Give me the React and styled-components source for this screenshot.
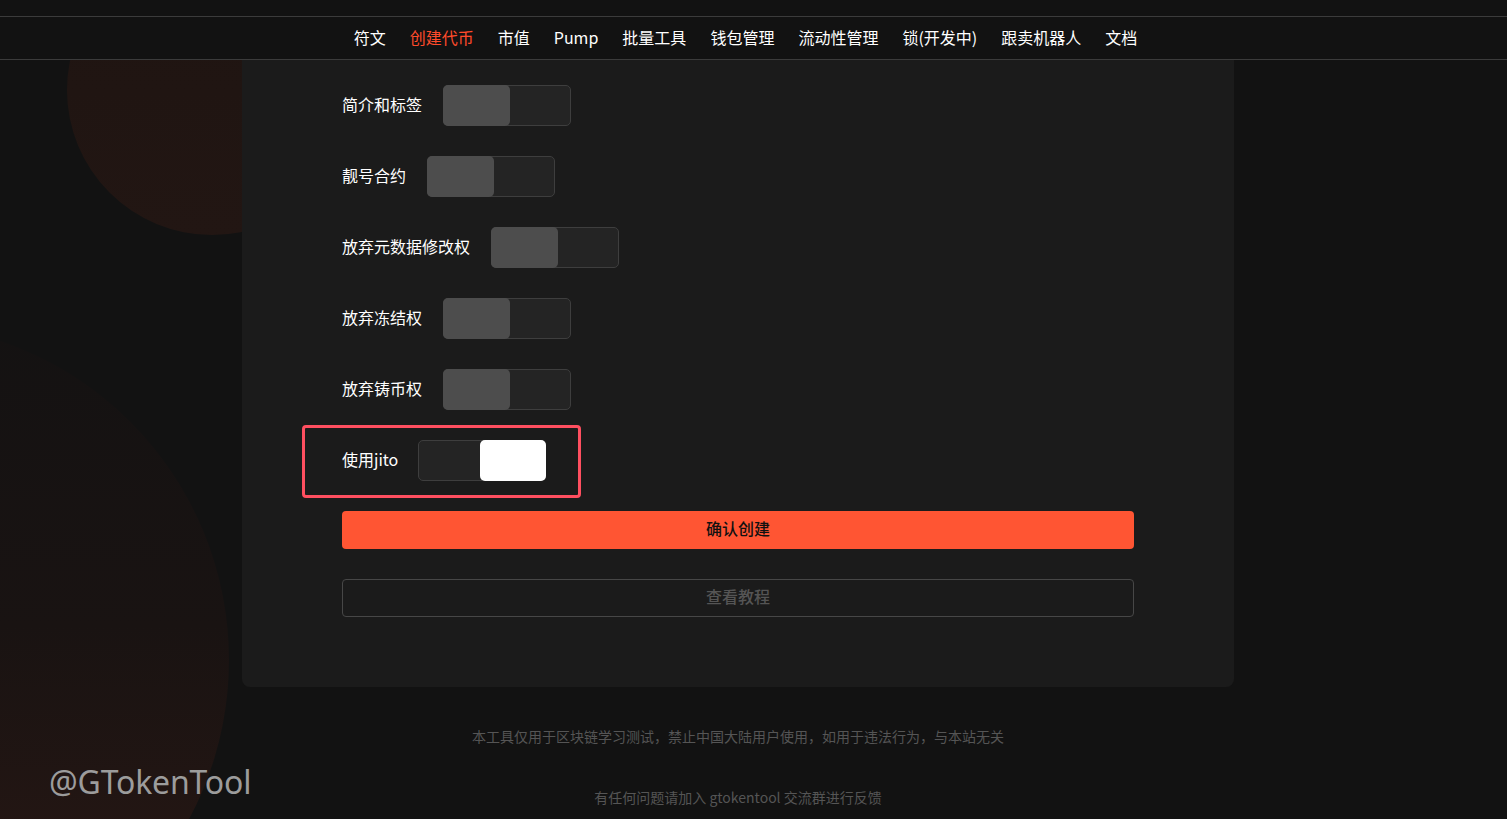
import styled, { createGlobalStyle } from "styled-components";

const GlobalStyle = createGlobalStyle`
  html, body {
    margin: 0;
    padding: 0;
    background: #121212;
    font-family: "Noto Sans CJK SC", "Noto Sans", sans-serif;
    color: #fff;
  }
  * { box-sizing: border-box; }
`;

const Page = styled.div`
  position: relative;
  min-height: 819px;
  overflow: hidden;
  background: #121212;
  padding-right: 31px;
`;

const Blob = styled.div`
  position: absolute;
  border-radius: 50%;
  pointer-events: none;
  left: ${({ x }) => x}px;
  top: ${({ y }) => y}px;
  width: ${({ size }) => size}px;
  height: ${({ size }) => size}px;
  background: ${({ bg }) => bg};
`;

const Header = styled.header`
  position: relative;
  z-index: 1;
  margin-right: -31px;
  padding-top: 16px;
  background: #121212;
`;

const Nav = styled.nav`
  display: flex;
  justify-content: center;
  align-items: center;
  gap: 24px;
  height: 44px;
  padding: 0 31px 3px 15px;
  border-top: 1px solid #3b3b3b;
  border-bottom: 1px solid #3b3b3b;
  background: #121212;
`;

const NavItem = styled.a`
  font-size: 16px;
  line-height: 20px;
  color: ${({ active }) => (active ? "#ff4b2b" : "#fff")};
  text-decoration: none;
  white-space: nowrap;
`;

const Card = styled.main`
  position: relative;
  width: 992px;
  margin: 0 auto;
  background: #1b1b1b;
  border-radius: 0 0 8px 8px;
  padding: 25px 100px 70px;
  display: flex;
  flex-direction: column;
  gap: 30px;
`;

const Row = styled.div`
  position: relative;
  display: flex;
  align-items: center;
  gap: 21px;
  height: 41px;
  align-self: flex-start;

  ${({ marked }) =>
    marked &&
    `
    gap: 20px;
    &::after {
      content: "";
      position: absolute;
      left: -40px;
      top: -15px;
      right: -35px;
      bottom: -17px;
      border: 3px solid #ff4f60;
      border-radius: 4px;
    }
  `}
`;

const Label = styled.span`
  font-size: 16px;
  line-height: 20px;
  padding-bottom: 4px;
  color: #fff;
  white-space: nowrap;
`;

const Switch = styled.div`
  position: relative;
  width: 128px;
  height: 41px;
  border: 1px solid #3e3e3e;
  border-radius: 5px;
  background: #242424;
`;

const Knob = styled.span`
  position: absolute;
  top: -1px;
  ${({ on }) => (on ? "right: -1px;" : "left: -1px;")}
  width: ${({ on }) => (on ? 66 : 67)}px;
  height: 41px;
  border-radius: 5px;
  background: ${({ on }) => (on ? "#ffffff" : "#4d4d4d")};
`;

const Button = styled.button`
  width: 100%;
  height: 38px;
  padding: 0 0 4px;
  border-radius: 4px;
  font-family: inherit;
  font-size: 16px;
  font-weight: 500;
  cursor: pointer;
  background: ${({ primary }) => (primary ? "#ff5533" : "transparent")};
  color: ${({ primary }) => (primary ? "#111" : "#555")};
  border: ${({ primary }) => (primary ? "none" : "1px solid #474747")};
`;

const Footer = styled.footer`
  position: relative;
  display: flex;
  flex-direction: column;
  align-items: center;
  padding-top: 40px;
  gap: 43px;
`;

const FootNote = styled.p`
  margin: 0;
  font-size: 14px;
  line-height: 18px;
  color: #555;
`;

const Watermark = styled.div`
  position: absolute;
  left: 49px;
  top: 760px;
  font-family: "Noto Sans", "Open Sans", sans-serif;
  font-size: 32px;
  line-height: 44px;
  color: #9c9c9c;
  letter-spacing: -0.2px;
  pointer-events: none;
`;

const navItems = [
  "符文",
  "创建代币",
  "市值",
  "Pump",
  "批量工具",
  "钱包管理",
  "流动性管理",
  "锁(开发中)",
  "跟卖机器人",
  "文档",
];

const options = [
  { label: "简介和标签", on: false },
  { label: "靓号合约", on: false },
  { label: "放弃元数据修改权", on: false },
  { label: "放弃冻结权", on: false },
  { label: "放弃铸币权", on: false },
  { label: "使用jito", on: true, marked: true },
];

export default function App() {
  return (
    <>
      <GlobalStyle />
      <Page>
        <Blob
          x={67}
          y={-55}
          size={290}
          bg="linear-gradient(180deg, #1e1411 0%, #221613 100%)"
        />
        <Blob
          x={-445}
          y={323}
          size={674}
          bg="linear-gradient(180deg, #141212 0%, #191312 45%, #2b1814 100%)"
        />
        <Header>
          <Nav>
            {navItems.map((item) => (
              <NavItem href="#" key={item} active={item === "创建代币"}>
                {item}
              </NavItem>
            ))}
          </Nav>
        </Header>
        <Card>
          {options.map((opt) => (
            <Row key={opt.label} marked={opt.marked}>
              <Label>{opt.label}</Label>
              <Switch>
                <Knob on={opt.on} />
              </Switch>
            </Row>
          ))}
          <Button primary>确认创建</Button>
          <Button>查看教程</Button>
        </Card>
        <Footer>
          <FootNote>
            本工具仅用于区块链学习测试，禁止中国大陆用户使用，如用于违法行为，与本站无关
          </FootNote>
          <FootNote>有任何问题请加入 gtokentool 交流群进行反馈</FootNote>
        </Footer>
        <Watermark>@GTokenTool</Watermark>
      </Page>
    </>
  );
}
